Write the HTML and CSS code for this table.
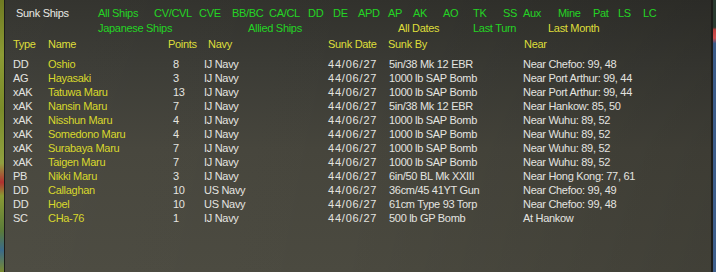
FILE: index.html
```html
<!DOCTYPE html>
<html>
<head>
<meta charset="utf-8">
<link rel="stylesheet" href="styles.css">
</head>
<body>
<div class="screen">
  <div class="strip-left"></div>
  <div class="panel">
    <div class="nav nav1">
      <span class="title">Sunk Ships</span>
      <span class="g">All Ships</span>
      <span class="g">CV/CVL</span>
      <span class="g">CVE</span>
      <span class="g">BB/BC</span>
      <span class="g">CA/CL</span>
      <span class="g">DD</span>
      <span class="g">DE</span>
      <span class="g">APD</span>
      <span class="g">AP</span>
      <span class="g">AK</span>
      <span class="g">AO</span>
      <span class="g">TK</span>
      <span class="g">SS</span>
      <span class="g">Aux</span>
      <span class="g">Mine</span>
      <span class="g">Pat</span>
      <span class="g">LS</span>
      <span class="g">LC</span>
    </div>
    <div class="nav nav2">
      <span class="g">Japanese Ships</span>
      <span class="g">Allied Ships</span>
      <span class="y">All Dates</span>
      <span class="g">Last Turn</span>
      <span class="y">Last Month</span>
    </div>
    <div class="table">
      <div class="row head">
        <span>Type</span><span>Name</span><span class="h-pts">Points</span><span class="h-navy">Navy</span><span>Sunk Date</span><span class="h-by">Sunk By</span><span class="h-near">Near</span>
      </div>
      <div class="row"><span>DD</span><span class="n">Oshio</span><span>8</span><span>IJ Navy</span><span class="d">44/06/27</span><span>5in/38 Mk 12 EBR</span><span>Near Chefoo: 99, 48</span></div>
      <div class="row"><span>AG</span><span class="n">Hayasaki</span><span>3</span><span>IJ Navy</span><span class="d">44/06/27</span><span>1000 lb SAP Bomb</span><span>Near Port Arthur: 99, 44</span></div>
      <div class="row"><span>xAK</span><span class="n">Tatuwa Maru</span><span>13</span><span>IJ Navy</span><span class="d">44/06/27</span><span>1000 lb SAP Bomb</span><span>Near Port Arthur: 99, 44</span></div>
      <div class="row"><span>xAK</span><span class="n">Nansin Maru</span><span>7</span><span>IJ Navy</span><span class="d">44/06/27</span><span>5in/38 Mk 12 EBR</span><span>Near Hankow: 85, 50</span></div>
      <div class="row"><span>xAK</span><span class="n">Nisshun Maru</span><span>4</span><span>IJ Navy</span><span class="d">44/06/27</span><span>1000 lb SAP Bomb</span><span>Near Wuhu: 89, 52</span></div>
      <div class="row"><span>xAK</span><span class="n">Somedono Maru</span><span>4</span><span>IJ Navy</span><span class="d">44/06/27</span><span>1000 lb SAP Bomb</span><span>Near Wuhu: 89, 52</span></div>
      <div class="row"><span>xAK</span><span class="n">Surabaya Maru</span><span>7</span><span>IJ Navy</span><span class="d">44/06/27</span><span>1000 lb SAP Bomb</span><span>Near Wuhu: 89, 52</span></div>
      <div class="row"><span>xAK</span><span class="n">Taigen Maru</span><span>7</span><span>IJ Navy</span><span class="d">44/06/27</span><span>1000 lb SAP Bomb</span><span>Near Wuhu: 89, 52</span></div>
      <div class="row"><span>PB</span><span class="n">Nikki Maru</span><span>3</span><span>IJ Navy</span><span class="d">44/06/27</span><span>6in/50 BL Mk XXIII</span><span>Near Hong Kong: 77, 61</span></div>
      <div class="row"><span>DD</span><span class="n">Callaghan</span><span>10</span><span>US Navy</span><span class="d">44/06/27</span><span>36cm/45 41YT Gun</span><span>Near Chefoo: 99, 49</span></div>
      <div class="row"><span>DD</span><span class="n">Hoel</span><span>10</span><span>US Navy</span><span class="d">44/06/27</span><span>61cm Type 93 Torp</span><span>Near Chefoo: 99, 48</span></div>
      <div class="row"><span>SC</span><span class="n">CHa-76</span><span>1</span><span>IJ Navy</span><span class="d">44/06/27</span><span>500 lb GP Bomb</span><span>At Hankow</span></div>
    </div>
  </div>
  <div class="strip-right"></div>
</div>
</body>
</html>
```

FILE: styles.css
```css
html, body {
  margin: 0;
  padding: 0;
  width: 716px;
  height: 272px;
  overflow: hidden;
  background: #2a2a26;
}
.screen {
  display: flex;
  width: 716px;
  height: 272px;
}
.strip-left {
  width: 4px;
  flex: none;
  background: linear-gradient(to bottom, #6f7a22 0%, #8c9a34 20%, #7b8c2a 40%, #90a040 60%, #b03030 67%, #8a9a34 72%, #5a7a3a 85%, #3a6a8a 92%, #7a8a30 100%);
}
.strip-right {
  width: 3px;
  flex: none;
  background: linear-gradient(to bottom, #2a3a30 0%, #2a3a30 10%, #c04040 11%, #d05050 14%, #3a5a88 16%, #3e5f8c 100%);
}
.panel {
  flex: 1;
  border-left: 1px solid #1c1c19;
  border-right: 2px solid #1c1c19;
  background:
    linear-gradient(100deg, rgba(255,255,255,0.02) 0%, rgba(0,0,0,0.0) 50%, rgba(0,0,0,0.14) 100%),
    linear-gradient(to bottom, #31312c 0%, #3b3b35 25%, #46453c 55%, #4b4a40 100%);
  padding-top: 6px;
  font-family: "Liberation Sans", Arial, sans-serif;
  font-size: 11px;
  letter-spacing: -0.3px;
  color: #e4e4e0;
}
.nav {
  display: grid;
  line-height: 15px;
  height: 15px;
  white-space: nowrap;
}
.nav1 {
  padding-left: 11px;
  grid-template-columns: 82px 56px 45px 33px 37px 39px 25px 25px 30px 25px 30px 30px 30px 20px 35px 35px 25px 25px auto;
}
.nav2 {
  padding-left: 93px;
  grid-template-columns: 150px 150px 75px 75px auto;
}
.title { color: #e8e8e4; }
.g { color: #24d424; }
.y { color: #dede3a; }
.table {
  margin-top: 1px;
}
.row {
  display: grid;
  padding-left: 8px;
  grid-template-columns: 35px 125px 31px 124px 61px 134px auto;
  line-height: 14px;
  height: 14px;
  white-space: nowrap;
}
.head {
  color: #dede3a;
  margin-bottom: 6px;
}
.h-pts { margin-left: -5px; }
.h-navy { margin-left: 4px; }
.h-by { margin-left: -1px; }
.h-near { margin-left: 1px; }
.n { color: #d8d82c; }
.d { letter-spacing: 0.8px; }
```
